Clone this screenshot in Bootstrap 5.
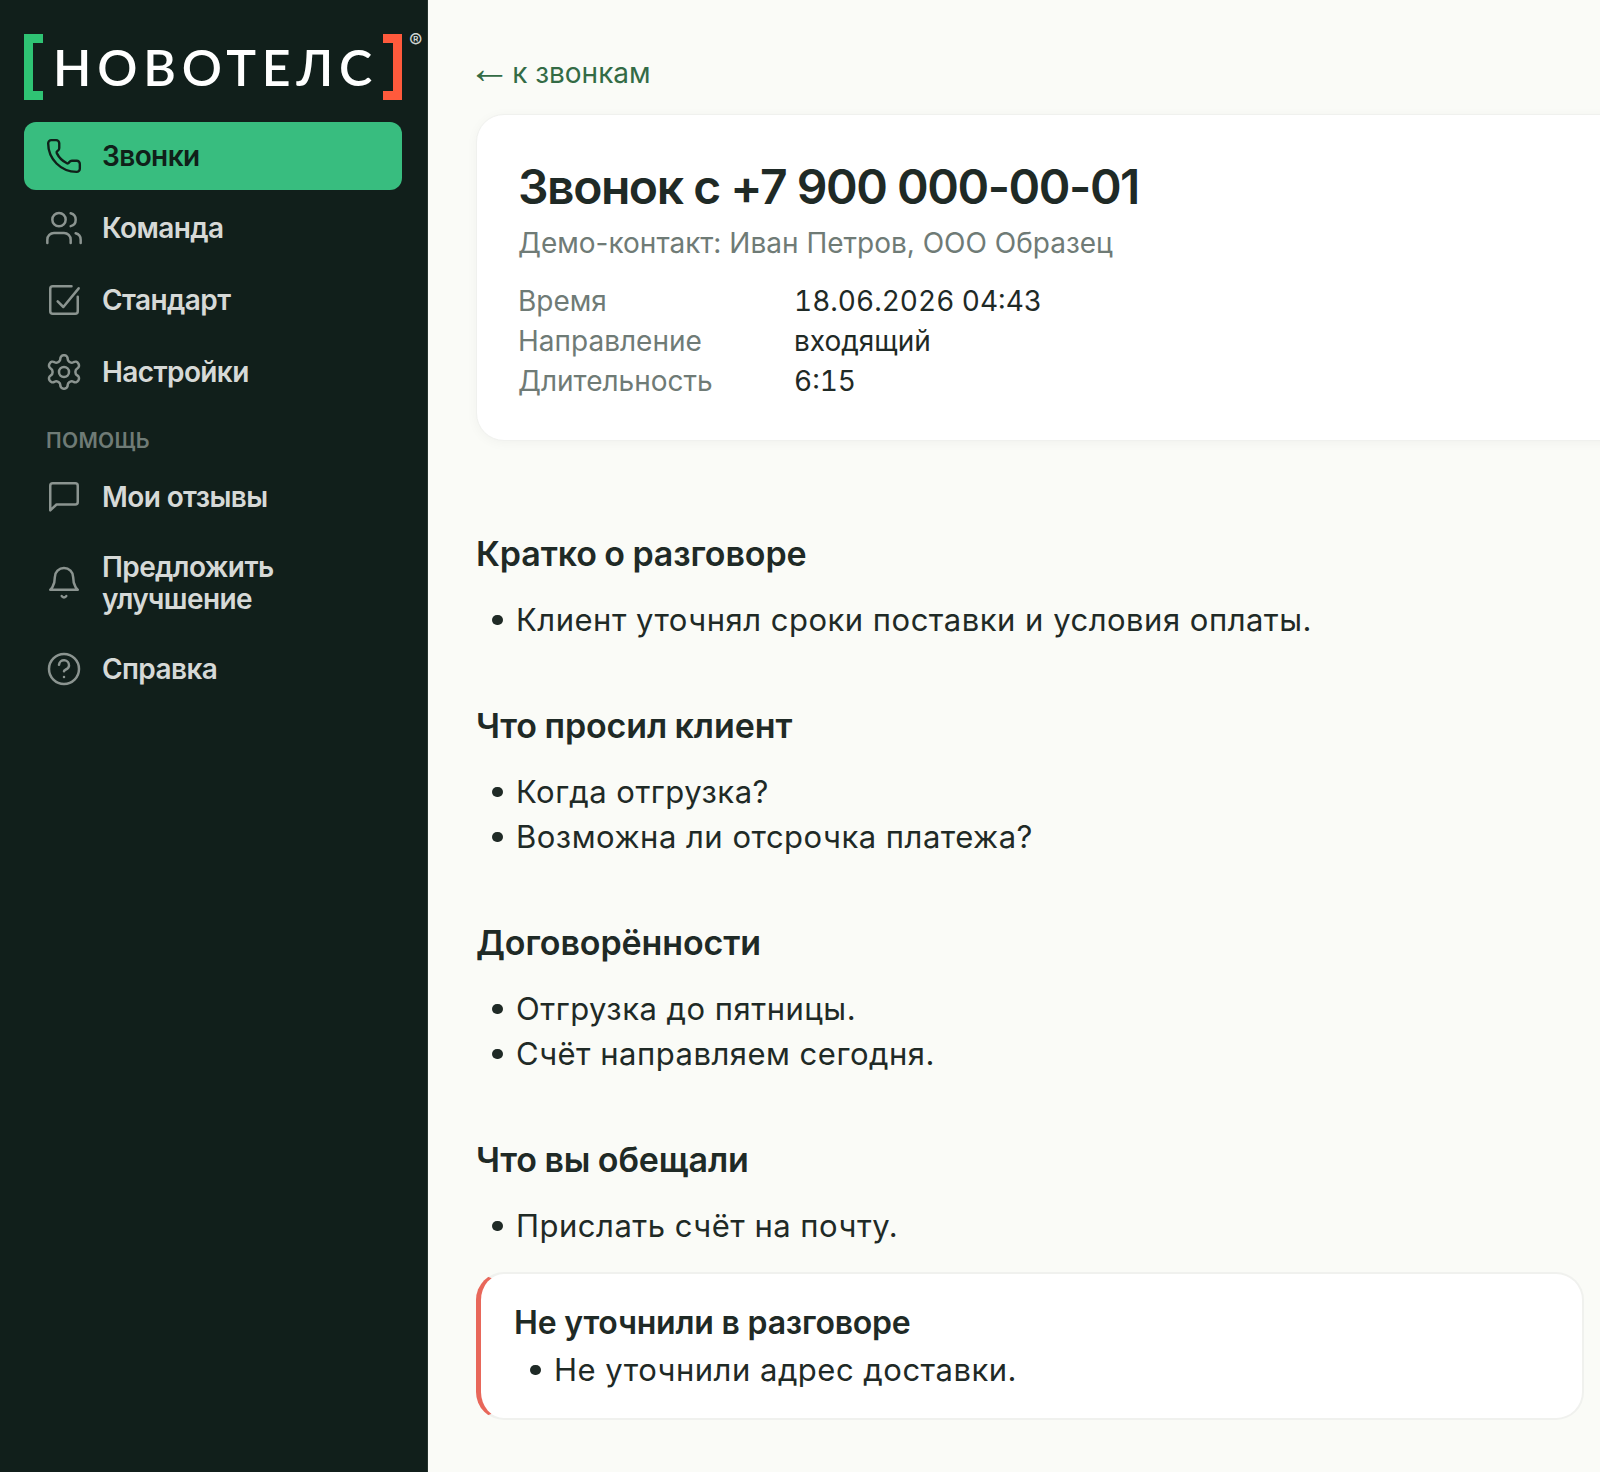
<!DOCTYPE html>
<html lang="ru">

<head>
  <meta charset="UTF-8">
  <meta name="viewport" content="width=device-width, initial-scale=1.0">
  <title>Звонок</title>
  <link href="https://cdn.jsdelivr.net/npm/bootstrap@5.3.0/dist/css/bootstrap.min.css" rel="stylesheet">
  <style>
    html, body { height: 100%; }
    body {
      background-color: #fafbf7;
      color: #1f2a26;
      font-family: Inter, "Liberation Sans", sans-serif;
      overflow: hidden;
    }
    .app-shell { min-height: 1472px; }
    .side-bar {
      flex: 0 0 428px;
      width: 428px;
      background-color: #111f1b;
      border-right: 1px solid #25332e;
      padding: 34px 25px 0 24px;
    }
    .brand {
      height: 66px;
      margin-bottom: 22px;
      position: relative;
      color: #fff;
    }
    .brand-br {
      width: 19px;
      height: 66px;
      border: 9px solid #2fc374;
      border-right: 0;
      flex: none;
    }
    .brand-br.right { border: 9px solid #ff5a3c; border-left: 0; }
    .brand-name {
      font-family: Lato, sans-serif;
      font-size: 50px;
      line-height: 66px;
      letter-spacing: 5.8px;
      font-weight: 600;
      flex: 1;
      padding-left: 10px;
      white-space: nowrap;
    }
    .brand-reg {
      position: absolute;
      left: 385px;
      top: 1px;
      font-size: 20px;
      line-height: 12px;
      color: #cfd4d1;
    }
    .menu-item {
      display: flex;
      align-items: center;
      gap: 18px;
      min-height: 68px;
      padding: 0 20px;
      border-radius: 12px;
      color: #d6d9d7;
      font-size: 28px;
      line-height: 32px;
      font-weight: 600;
      letter-spacing: -.6px;
      text-decoration: none;
    }
    .menu-item svg {
      width: 40px;
      height: 40px;
      flex: none;
      stroke: #8b9490;
      fill: none;
      stroke-width: 1.5;
      stroke-linecap: round;
      stroke-linejoin: round;
    }
    .menu-item.is-on { background-color: #38bd7f; color: #102019; }
    .menu-item.is-on svg { stroke: #102019; }
    .menu-item.tall { min-height: 96px; }
    .menu-title {
      font-size: 21px;
      line-height: 26px;
      font-weight: 600;
      letter-spacing: .3px;
      color: #6f7b76;
      padding: 18px 22px 5px;
      text-transform: uppercase;
    }
    .main-col {
      flex: 1;
      min-width: 0;
      padding: 54px 16px 0 48px;
    }
    .back-link {
      color: #336b45;
      font-size: 28px;
      line-height: 38px;
      text-decoration: none;
      display: block;
      margin-bottom: 22px;
    }
    .back-arrow {
      font-family: "Liberation Sans", sans-serif;
      font-size: 43px;
      line-height: 0;
      margin-left: -8px;
    }
    .back-gap { font-size: 4px; line-height: 0; }
    .call-card {
      width: 1200px;
      background: #fff;
      border: 1px solid #f0f1ee;
      border-radius: 28px;
      padding: 42px 40px 40px 41px;
      height: 327px;
      box-shadow: 0 2px 12px rgba(20, 30, 25, .04);
      margin-bottom: 90px;
    }
    .call-title {
      font-size: 48px;
      line-height: 60px;
      font-weight: 600;
      letter-spacing: -1.45px;
      margin: 0 0 6px;
    }
    .call-sub {
      font-size: 28px;
      line-height: 40px;
      color: #6f7b76;
      margin-bottom: 18px;
    }
    .call-meta {
      display: grid;
      grid-template-columns: 276px auto;
      font-size: 28px;
      line-height: 40px;
      justify-content: start;
      font-variant-numeric: tabular-nums;
    }
    .call-meta span:nth-child(odd) { color: #6f7b76; }
    .sec-title {
      font-size: 34px;
      line-height: 46px;
      font-weight: 600;
      letter-spacing: -.1px;
      word-spacing: -1px;
      margin: 0 0 19.5px;
    }
    .sec-list {
      font-size: 31px;
      line-height: 45px;
      list-style: none;
      padding-left: 40px;
      margin-bottom: 61.5px;
      letter-spacing: .5px;
    }
    .sec-list li { position: relative; }
    .sec-list li::before {
      content: "";
      position: absolute;
      left: -24px;
      top: 18px;
      width: 10.5px;
      height: 10.5px;
      border-radius: 50%;
      background-color: #1f2a26;
    }
    .sec-list.last { margin-bottom: 24px; }
    .gap-box {
      background: #fff;
      border: 2px solid #f0f1ee;
      border-left: 5px solid #e8675a;
      border-radius: 28px;
      padding: 26px 32px 26px 33px;
    }
    .gap-box .sec-title { font-size: 32px; letter-spacing: -.2px; word-spacing: 0; margin-bottom: 1px; }
    .gap-box .sec-list { margin-bottom: 0; padding-left: 40px; }
  </style>
</head>

<body>
  <div class="app-shell d-flex">
    <aside class="side-bar">
      <div class="brand d-flex">
        <div class="brand-br"></div>
        <div class="brand-name">НОВОТЕЛС</div>
        <div class="brand-br right"></div>
        <span class="brand-reg">®</span>
      </div>
      <nav class="d-flex flex-column gap-1">
        <a class="menu-item is-on" href="#">
          <svg viewBox="0 0 24 24"><path transform="translate(12 12) scale(.95) translate(-12 -12)" d="M13.832 16.568a1 1 0 0 0 1.213-.303l.355-.465A2 2 0 0 1 17 15h3a2 2 0 0 1 2 2v3a2 2 0 0 1-2 2A18 18 0 0 1 2 4a2 2 0 0 1 2-2h3a2 2 0 0 1 2 2v3a2 2 0 0 1-.8 1.600l-.468.351a1 1 0 0 0-.292 1.233 14 14 0 0 0 6.392 6.384"/></svg>
          Звонки
        </a>
        <a class="menu-item" href="#">
          <svg viewBox="0 0 24 24"><path d="M16 21v-2a4 4 0 0 0-4-4H6a4 4 0 0 0-4 4v2"/><circle cx="9" cy="7" r="4"/><path d="M22 21v-2a4 4 0 0 0-3-3.870"/><path d="M16 3.130a4 4 0 0 1 0 7.750"/></svg>
          Команда
        </a>
        <a class="menu-item" href="#">
          <svg viewBox="0 0 24 24"><path d="M20.250 10v8.750a1.500 1.500 0 0 1-1.500 1.500H5.250a1.500 1.500 0 0 1-1.500-1.500V5.250a1.500 1.500 0 0 1 1.500-1.500H16.500"/><path d="M8.200 12.800 11.600 16.200 20.800 5"/></svg>
          Стандарт
        </a>
        <a class="menu-item" href="#">
          <svg viewBox="0 0 24 24"><path d="M12.220 2h-.44a2 2 0 0 0-2 2v.18a2 2 0 0 1-1 1.730l-.43.25a2 2 0 0 1-2 0l-.15-.08a2 2 0 0 0-2.730.73l-.22.38a2 2 0 0 0 .73 2.730l.15.1a2 2 0 0 1 1 1.720v.51a2 2 0 0 1-1 1.740l-.15.09a2 2 0 0 0-.73 2.730l.22.38a2 2 0 0 0 2.730.73l.15-.08a2 2 0 0 1 2 0l.43.25a2 2 0 0 1 1 1.730V20a2 2 0 0 0 2 2h.44a2 2 0 0 0 2-2v-.18a2 2 0 0 1 1-1.730l.43-.25a2 2 0 0 1 2 0l.15.08a2 2 0 0 0 2.730-.73l.22-.39a2 2 0 0 0-.73-2.730l-.15-.08a2 2 0 0 1-1-1.740v-.5a2 2 0 0 1 1-1.740l.15-.09a2 2 0 0 0 .73-2.730l-.22-.38a2 2 0 0 0-2.730-.73l-.15.08a2 2 0 0 1-2 0l-.43-.25a2 2 0 0 1-1-1.730V4a2 2 0 0 0-2-2z"/><circle cx="12" cy="12" r="3"/></svg>
          Настройки
        </a>
        <div class="menu-title">Помощь</div>
        <a class="menu-item" href="#">
          <svg viewBox="0 0 24 24"><path d="M20.250 15a1.500 1.500 0 0 1-1.500 1.500H7.500L3.750 20V5.250a1.500 1.500 0 0 1 1.500-1.500h13.500a1.500 1.500 0 0 1 1.500 1.500z"/></svg>
          Мои отзывы
        </a>
        <a class="menu-item tall" href="#">
          <svg viewBox="0 0 24 24"><path d="M6.500 8.500a5.500 5.500 0 0 1 11 0c0 5.500 2.750 7.500 2.750 7.500H3.750s2.750-2 2.750-7.500"/><path d="M10.600 19.800a1.600 1.600 0 0 0 2.800 0"/></svg>
          <span>Предложить улучшение</span>
        </a>
        <a class="menu-item" href="#">
          <svg viewBox="0 0 24 24"><circle cx="12" cy="12" r="9"/><path d="M9 9.500a3 3 0 0 1 6 .5c0 2-3 2.500-3 3.300"/><path d="M12 16.800h.01"/></svg>
          Справка
        </a>
      </nav>
    </aside>

    <main class="main-col">
      <a class="back-link" href="#"><span class="back-arrow">←</span><span class="back-gap"> </span>к звонкам</a>

      <div class="call-card">
        <h1 class="call-title">Звонок с +7 900 000-00-01</h1>
        <div class="call-sub">Демо-контакт: Иван Петров, ООО Образец</div>
        <div class="call-meta">
          <span>Время</span><span>18.06.2026 04:43</span>
          <span>Направление</span><span>входящий</span>
          <span>Длительность</span><span>6:15</span>
        </div>
      </div>

      <h2 class="sec-title">Кратко о разговоре</h2>
      <ul class="sec-list">
        <li>Клиент уточнял сроки поставки и условия оплаты.</li>
      </ul>

      <h2 class="sec-title">Что просил клиент</h2>
      <ul class="sec-list">
        <li>Когда отгрузка?</li>
        <li>Возможна ли отсрочка платежа?</li>
      </ul>

      <h2 class="sec-title">Договорённости</h2>
      <ul class="sec-list">
        <li>Отгрузка до пятницы.</li>
        <li>Счёт направляем сегодня.</li>
      </ul>

      <h2 class="sec-title">Что вы обещали</h2>
      <ul class="sec-list last">
        <li>Прислать счёт на почту.</li>
      </ul>

      <div class="gap-box">
        <h2 class="sec-title">Не уточнили в разговоре</h2>
        <ul class="sec-list">
          <li>Не уточнили адрес доставки.</li>
        </ul>
      </div>
    </main>
  </div>
  <script src="https://cdn.jsdelivr.net/npm/bootstrap@5.3.0/dist/js/bootstrap.bundle.min.js"></script>
</body>

</html>
